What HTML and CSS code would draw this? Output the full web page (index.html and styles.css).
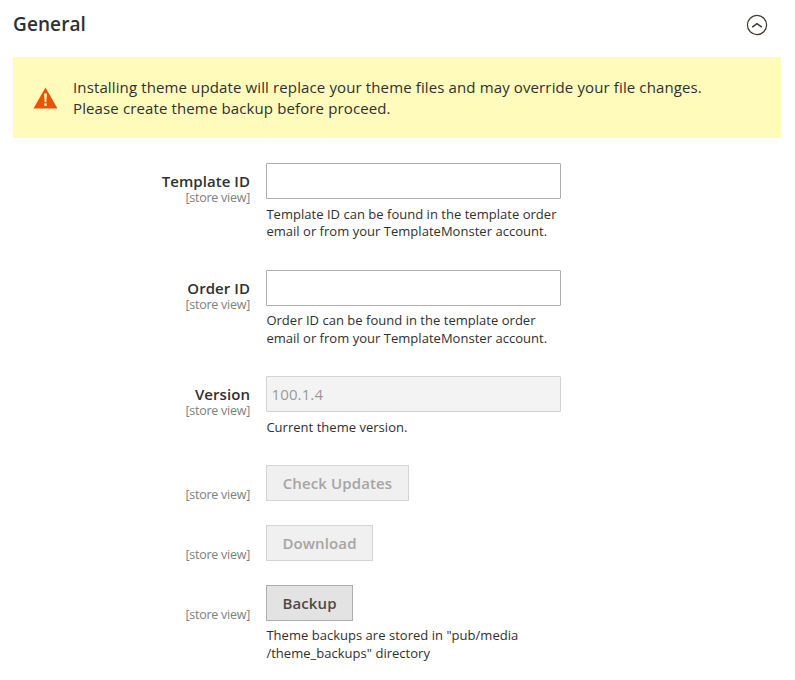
FILE: index.html
```html
<!DOCTYPE html>
<html lang="en">
<head>
<meta charset="utf-8">
<title>General</title>
<link rel="stylesheet" href="styles.css">
</head>
<body>
<section class="section">
  <header class="head">
    <h2>General</h2>
    <svg class="toggle" width="22" height="22" viewBox="0 0 22 22" fill="none" stroke="#41362f"><circle cx="11" cy="11" r="9.6" stroke-width="1.2"/><path d="M6.200 13.200 11 9.700l4.800 3.500" stroke-width="1.500"/></svg>
  </header>
  <div class="message">
    <svg class="warn" width="25" height="22" viewBox="0 0 25 22"><path d="M12.500 0.500 24.500 21.500H0.500Z" fill="#eb5202"/><path d="M11.100 6.500h2.800l-.6 8.700h-1.600Z" fill="#fffbbb"/><circle cx="12.500" cy="17.700" r="1.400" fill="#fffbbb"/></svg>
    <p>Installing theme update will replace your theme files and may override your file changes.<br>Please create theme backup before proceed.</p>
  </div>
  <form class="fields">
    <div class="row row-template">
      <div class="label"><label for="tid">Template ID</label><span>[store view]</span></div>
      <div class="control"><input id="tid" type="text"><p class="note note-tight">Template ID can be found in the template order<br>email or from your TemplateMonster account.</p></div>
    </div>
    <div class="row row-order">
      <div class="label"><label for="oid">Order ID</label><span>[store view]</span></div>
      <div class="control"><input id="oid" type="text"><p class="note">Order ID can be found in the template order<br>email or from your TemplateMonster account.</p></div>
    </div>
    <div class="row row-version">
      <div class="label"><label for="ver">Version</label><span>[store view]</span></div>
      <div class="control"><input id="ver" type="text" value="100.1.4" disabled><p class="note note-tight">Current theme version.</p></div>
    </div>
    <div class="row row-action">
      <div class="label label-action"><span>[store view]</span></div>
      <div class="control"><button class="check" type="button" disabled>Check Updates</button></div>
    </div>
    <div class="row row-action">
      <div class="label label-action"><span>[store view]</span></div>
      <div class="control"><button class="download" type="button" disabled>Download</button></div>
    </div>
    <div class="row row-action">
      <div class="label label-action"><span>[store view]</span></div>
      <div class="control"><button class="backup" type="button">Backup</button><p class="note">Theme backups are stored in "pub/media<br>/theme_backups" directory</p></div>
    </div>
  </form>
</section>
</body>
</html>
```
FILE: styles.css
```css
* { box-sizing: border-box; }
body {
  margin: 0;
  min-height: 680px;
  background: #fff;
  color: #303030;
  font-family: "Open Sans", "Noto Sans", sans-serif;
  font-size: 15px;
}
h2, p { margin: 0; }
.section { padding: 0 14px 0 13px; }
.head {
  display: flex;
  justify-content: space-between;
  height: 57px;
  padding: 10px 13px 0 0;
}
h2 { font-size: 19px; line-height: 28px; font-weight: 600; letter-spacing: 0.1px; }
.toggle { margin-top: 4px; }
.message {
  display: flex;
  height: 81px;
  padding: 20px;
  background: #fffbbb;
}
.message p {
  margin-left: 15px;
  line-height: 21px;
  letter-spacing: 0.125px;
  white-space: nowrap;
}
.warn { flex: none; margin-top: 10px; }
.fields { padding-top: 25px; }
.row { display: flex; }
.row-template { height: 107px; }
.row-order { height: 106px; }
.row-version { height: 89px; }
.row-action { min-height: 60px; }
.label {
  display: flex;
  flex-direction: column;
  width: 237px;
  margin-right: 16px;
  padding-top: 9px;
  text-align: right;
}
.label label { font-size: 15px; line-height: 19px; font-weight: 600; letter-spacing: 0.06px; }
.label span { font-size: 12.5px; line-height: 13px; letter-spacing: -0.26px; color: #808080; }
.label-action { padding-top: 23px; }
.control { width: 295px; }
input, button {
  display: block;
  height: 36px;
  border: 1px solid #adadad;
  border-radius: 1px;
  font: inherit;
}
input { width: 295px; padding: 0 5px 0 4.5px; background: #fff; letter-spacing: 0.125px; }
input:disabled { background: #f3f3f3; border-color: #d2d2d2; color: #999; }
button {
  padding: 0;
  border-radius: 0;
  background: #e3e3e3;
  color: #514943;
  font-weight: 600;
  letter-spacing: 0.12px;
}
button:disabled { background: #f0f0f0; border-color: #d4d4d4; color: #a8a4a1; }
.check { width: 143px; }
.download { width: 107px; }
.backup { width: 87px; }
.note {
  padding: 6px 0 0 0.4px;
  font-size: 13px;
  line-height: 17.7px;
  letter-spacing: 0.025px;
  white-space: nowrap;
}
.note-tight { padding-top: 7px; line-height: 17px; }
```
